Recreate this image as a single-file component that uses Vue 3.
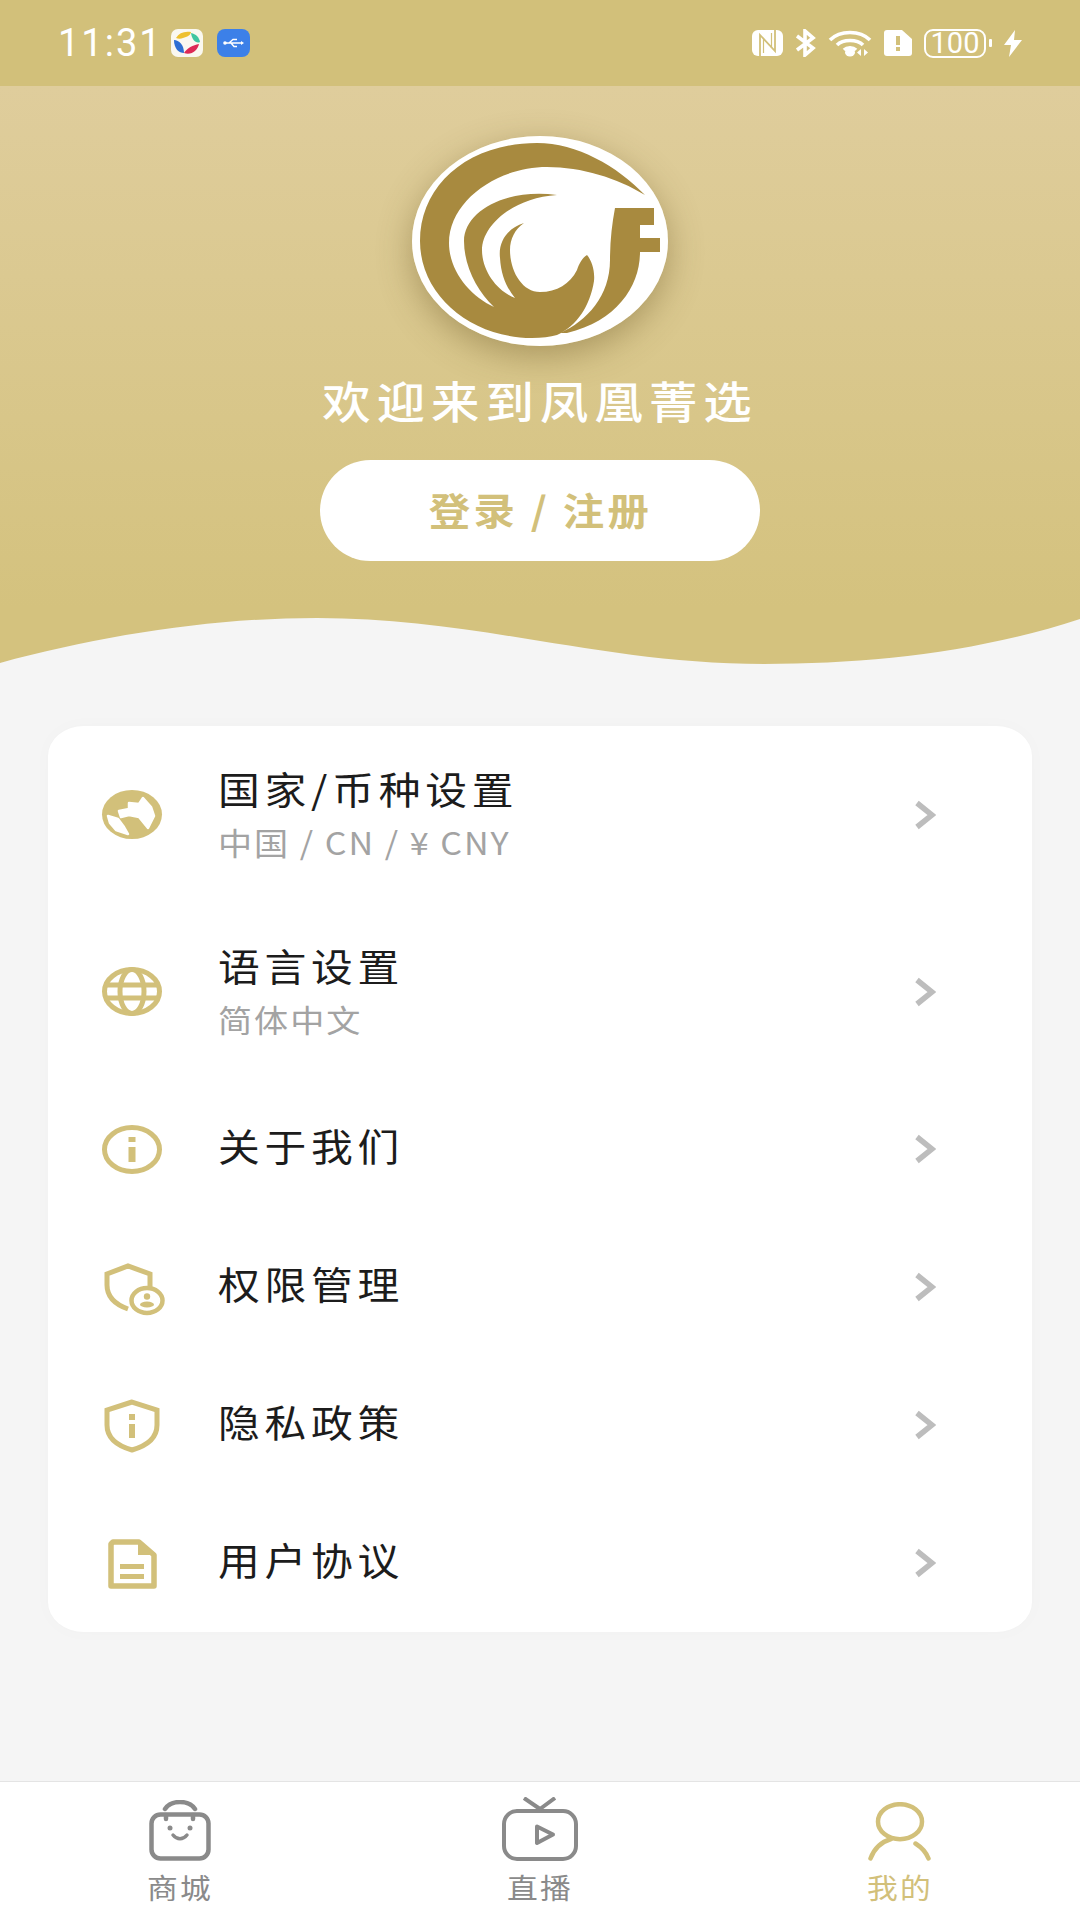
<script setup>
const rows = [
  { key: 'earth', title: '国家/币种设置', sub: '中国 / CN / ¥ CNY' },
  { key: 'globe', title: '语言设置', sub: '简体中文' },
  { key: 'info', title: '关于我们' },
  { key: 'perm', title: '权限管理' },
  { key: 'privacy', title: '隐私政策' },
  { key: 'doc', title: '用户协议' }
]
</script>

<template>
  <div class="page">
    <header class="top">
      <div class="status">
        <span class="time">11:31</span>
        <svg class="app" viewBox="0 0 32 28" width="32" height="28">
          <rect width="32" height="28" rx="7" fill="#faf8f0" />
          <path d="M5 9C8 4 13 2 20 3C20 6 16 8 12 9C10 10 7 10 5 9Z" fill="#eec02f" />
          <path d="M20 4C25 5 28 8 29 13C25 15 21 11 20 4Z" fill="#3fc6a0" />
          <path d="M3 11C8 11 13 16 13 24C8 24 3 20 3 11Z" fill="#2f6fd3" />
          <path d="M13 24C16 19 22 16 28 15C27 21 20 27 13 24Z" fill="#dd2a55" />
        </svg>
        <svg class="usb" viewBox="0 0 33 28" width="33" height="28">
          <rect width="33" height="28" rx="8" fill="#3c80e8" />
          <path d="M8 14H25M12 14L16 10.500H20M14 14L17 17.500H20" fill="none" stroke="#fff" stroke-width="1.400" />
          <circle cx="8" cy="14" r="1.800" fill="#fff" />
          <path d="M24 12L27 14L24 16Z" fill="#fff" />
        </svg>
        <div class="status-right">
          <svg viewBox="0 0 31 26" width="31" height="26">
            <rect width="31" height="26" rx="6" fill="#fff" />
            <path d="M8 26V5L23 21V0" fill="none" stroke="#d2c07a" stroke-width="1.800" />
            <path d="M11.500 8V23M19.500 3V18" fill="none" stroke="#d2c07a" stroke-width="1.200" />
          </svg>
          <svg viewBox="0 0 21 28" width="21" height="28">
            <path d="M2 7L18 19L10 26V2L18 9L2 21" fill="none" stroke="#fff" stroke-width="3.600" />
          </svg>
          <svg viewBox="0 0 44 28" width="44" height="28">
            <path d="M2 11C12 1 32 1 42 11M9 16C15 10 29 10 35 16M16 21C19 18 25 18 28 21" fill="none" stroke="#fff" stroke-width="3.600" />
            <ellipse cx="22" cy="23.500" rx="5" ry="4" fill="#fff" />
            <path d="M33 20V27L29 23.500ZM36 20V27L40 23.500Z" fill="#fff" />
          </svg>
          <svg viewBox="0 0 28 26" width="28" height="26">
            <path d="M3 0H18L28 9V23C28 25 27 26 25 26H3C1 26 0 25 0 23V3C0 1 1 0 3 0Z" fill="#fff" />
            <rect x="12" y="6" width="4" height="9" fill="#d2c07a" />
            <rect x="12" y="17" width="4" height="4" fill="#d2c07a" />
          </svg>
          <div class="battery"><span class="cell">100</span><i class="nub"></i></div>
          <svg viewBox="0 0 18 27" width="18" height="27">
            <path d="M11 0L0 15H7L5 27L18 10H10Z" fill="#fff" />
          </svg>
        </div>
      </div>
      <div class="hero">
        <div class="logo">
          <svg viewBox="0 0 256 210" width="256" height="210">
            <ellipse cx="128" cy="105" rx="128" ry="105" fill="#fff" />
            <path fill="#a88a3f" d="M233 59C205 30 165 7 125 7C55 7 8 50 8 105C8 160 60 202 120 202C130 202 138 201 145 199C165 190 178 170 182 145C183 135 180 125 175 119C170 122 167 128 165 134C158 148 145 156 128 156C110 156 98 135 98 114C98 103 103 93 112 87C96 92 86 105 88 122C89 140 95 152 103 162C85 155 70 135 70 114C70 90 100 62 145 59C95 52 52 75 52 105C52 130 65 155 82 171C58 160 37 135 37 107C37 65 85 31 135 31C170 31 205 42 233 59Z" />
            <path fill="#a88a3f" d="M203 72H242V89H228V102H248V116H228C228 150 205 185 155 197H148C175 185 198 160 198 124C198 105 200 88 203 72Z" />
          </svg>
        </div>
        <h1 class="welcome">欢迎来到凤凰菁选</h1>
        <button class="login"><span>登录 / 注册</span></button>
        <svg class="wave" viewBox="0 0 1080 50" width="1080" height="50" preserveAspectRatio="none">
          <path d="M0 47C100 20 210 2 317 2C480 2 600 48 764 48C870 48 980 36 1080 3V50H0Z" fill="#f5f5f5" />
        </svg>
      </div>
    </header>

    <main class="content">
      <section class="card">
        <div v-for="r in rows" :key="r.key" class="row" :class="{ tall: r.sub }">
          <svg class="icon" viewBox="0 0 60 49" width="60" height="49">
            <template v-if="r.key === 'earth'">
              <ellipse cx="30" cy="24.500" rx="30" ry="24.500" fill="#d2c07a" />
              <path fill="#fff" stroke="#fff" stroke-width="2.500" stroke-linejoin="round" d="M17 21L27 19V13L37 14L41 8L49 17L52 26L46 38L37 27L27 25L19 27ZM6 26L16 29L22 37L26 44L14 40L8 33Z" />
            </template>
            <g v-else-if="r.key === 'globe'" fill="none" stroke="#d2c07a" stroke-width="5">
              <ellipse cx="30" cy="24.500" rx="27.500" ry="22" />
              <ellipse cx="30" cy="24.500" rx="12" ry="22" />
              <path d="M3 18H57M3 31H57" />
            </g>
            <template v-else-if="r.key === 'info'">
              <ellipse cx="30" cy="24.500" rx="27.500" ry="22" fill="none" stroke="#d2c07a" stroke-width="5" />
              <path fill="#d2c07a" d="M26.500 12H33.500V17H26.500ZM26.500 22H33.500V37H26.500Z" />
            </template>
            <g v-else-if="r.key === 'perm'" fill="none" stroke="#d2c07a">
              <path stroke-width="5" d="M48 25V11L26 3L5 11V22C5 33 12 41 26 46" />
              <ellipse cx="45" cy="37.500" rx="15.500" ry="12.500" fill="#fff" stroke-width="4.500" />
              <circle cx="45" cy="33.500" r="3.200" fill="#d2c07a" stroke="none" />
              <ellipse cx="45" cy="41.500" rx="7" ry="3" fill="#d2c07a" stroke="none" />
            </g>
            <template v-else-if="r.key === 'privacy'">
              <path fill="none" stroke="#d2c07a" stroke-width="5" d="M30 1L5 9V24C5 37 16 45 30 49C44 45 55 37 55 24V9Z" />
              <path fill="#d2c07a" d="M27 13H33V19H27ZM27 23H33V37H27Z" />
            </template>
            <template v-else>
              <path fill="none" stroke="#d2c07a" stroke-width="5.500" stroke-linejoin="round" d="M11 3H37L52 16V47H9V5Z" />
              <path fill="#d2c07a" d="M36 2L53 16H36ZM18 25H42V30H18ZM18 35H42V40H18Z" />
            </template>
          </svg>
          <div class="labels">
            <div class="title"><span>{{ r.title }}</span></div>
            <div v-if="r.sub" class="sub"><span>{{ r.sub }}</span></div>
          </div>
          <svg class="chev" viewBox="0 0 22 30" width="22" height="30">
            <path d="M3 3L18 15L3 27" fill="none" stroke="#bdbdbd" stroke-width="5.500" />
          </svg>
        </div>
      </section>
    </main>

    <nav class="tabs">
      <div class="tab">
        <svg viewBox="0 0 62 61" width="62" height="61" fill="none" stroke="#8a8a8a" stroke-width="4.500" stroke-linecap="round">
          <rect x="2.500" y="14.500" width="57" height="44" rx="9" />
          <path d="M16 9C20 3 26 2 31 2C36 2 42 3 46 9M17 15V19M44 15V19" />
          <path d="M24 35C28 40 34 40 38 35" stroke-width="3.500" />
          <circle cx="21" cy="28" r="2.500" fill="#8a8a8a" stroke="none" />
          <circle cx="41" cy="28" r="2.500" fill="#8a8a8a" stroke="none" />
        </svg>
        <span class="tab-label">商城</span>
      </div>
      <div class="tab">
        <svg viewBox="0 0 76 64" width="76" height="64" fill="none" stroke="#8a8a8a" stroke-width="4" stroke-linejoin="round">
          <rect x="2" y="14" width="72" height="48" rx="13" />
          <path d="M22 1L38 12L53 1" />
          <path d="M35 29.500L51 37.500L35 46Z" />
        </svg>
        <span class="tab-label">直播</span>
      </div>
      <div class="tab active">
        <svg viewBox="0 0 64 59" width="64" height="59" fill="none" stroke="#d2c07a" stroke-width="4.500" stroke-linecap="round">
          <ellipse cx="32" cy="19.700" rx="22" ry="17.500" />
          <path d="M23 37C13 40 6 47 2.500 56.500M47.500 41.500C53 45 58 50 60.500 56.500" />
        </svg>
        <span class="tab-label">我的</span>
      </div>
    </nav>
  </div>
</template>

<style>
html, body { margin: 0; background: #f5f5f5; }
</style>

<style scoped>
.page {
  width: 1080px;
  height: 1920px;
  display: flex;
  flex-direction: column;
  overflow: hidden;
  background: #f5f5f5;
  font-family: "Noto Sans CJK SC", "Noto Sans", sans-serif;
}
.status {
  height: 86px;
  background: #d2c07a;
  display: flex;
  align-items: center;
  padding: 0 58px;
  box-sizing: border-box;
  color: #fff;
}
.time {
  font-family: Roboto, sans-serif;
  font-size: 38px;
  font-weight: 400;
  letter-spacing: 2px;
  width: 113px;
}
.usb { margin-left: 14px; }
.status-right {
  margin-left: auto;
  display: flex;
  align-items: center;
  gap: 12px;
}
.battery {
  display: flex;
  align-items: center;
  gap: 3px;
}
.cell {
  width: 62px;
  height: 29px;
  border: 2.500px solid #fff;
  border-radius: 9px;
  box-sizing: border-box;
  font: 400 29px/24px Roboto, sans-serif;
  text-align: center;
}
.nub {
  width: 3px;
  height: 8px;
  background: #fff;
  border-radius: 1px;
}
.hero {
  position: relative;
  height: 580px;
  background: linear-gradient(#dfcd9c, #d4c27e 90%);
  display: flex;
  flex-direction: column;
  align-items: center;
  padding-top: 50px;
  box-sizing: border-box;
}
.logo {
  width: 256px;
  height: 210px;
  border-radius: 50%;
  box-shadow: 0 10px 34px rgba(110, 90, 40, 0.45);
}
.logo svg { display: block; }
.welcome {
  margin: 23px 0 0;
  font-size: 44px;
  line-height: 62px;
  font-weight: 500;
  letter-spacing: 5.500px;
  color: #fff;
  transform: scaleX(1.1);
}
.login {
  margin-top: 29px;
  width: 440px;
  height: 101px;
  border: 0;
  border-radius: 51px;
  background: #fff;
  color: #d2c07a;
  font-family: inherit;
  font-size: 38px;
  line-height: 48px;
  font-weight: 700;
  letter-spacing: 3px;
  padding: 0 0 4px;
}
.login span {
  display: inline-block;
  transform: scaleX(1.09);
}
.wave {
  position: absolute;
  left: 0;
  bottom: 0;
  display: block;
}
.content {
  flex: 1;
  padding: 60px 48px 0;
}
.card {
  background: #fff;
  border-radius: 36px / 30px;
  box-shadow: 0 0 20px rgba(0, 0, 0, 0.02);
  padding: 0 96px 0 54px;
}
.row {
  height: 138px;
  display: flex;
  align-items: center;
}
.row.tall { height: 177px; }
.icon {
  flex: none;
  overflow: visible;
}
.labels {
  margin-left: 56px;
  flex: 1;
  padding-bottom: 9px;
}
.tall .labels { padding-bottom: 5px; }
.title {
  font-size: 38px;
  line-height: 50px;
  letter-spacing: 4.300px;
  color: #1c1c1c;
}
.sub {
  font-size: 31px;
  line-height: 40px;
  letter-spacing: 1.800px;
  color: #a3a3a3;
  margin-top: 9px;
}
.title span, .sub span {
  display: inline-block;
  transform: scaleX(1.1);
  transform-origin: left center;
}
.chev { flex: none; }
.tabs {
  height: 139px;
  background: #fff;
  border-top: 1px solid #e4e4e4;
  box-sizing: border-box;
  display: grid;
  grid-template-columns: repeat(3, 360px);
}
.tab {
  display: flex;
  flex-direction: column;
  align-items: center;
  justify-content: flex-end;
  color: #8a8a8a;
  padding-bottom: 14px;
}
.tab svg { display: block; }
.tab-label {
  font-size: 28px;
  line-height: 38px;
  letter-spacing: 2px;
  transform: scaleX(1.1);
  margin-top: 7px;
}
.tab.active { color: #d2c07a; }
</style>
